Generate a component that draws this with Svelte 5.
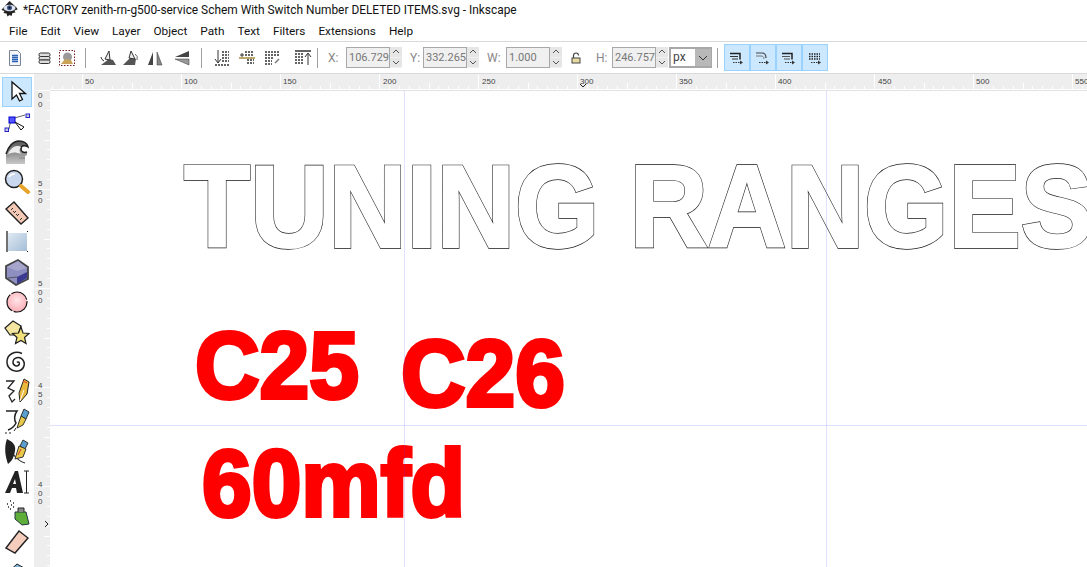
<script>
  const menu = ['File','Edit','View','Layer','Object','Path','Text','Filters','Extensions','Help'];
  const hLabels = [[83,'50'],[182,'100'],[281,'150'],[381,'200'],[480,'250'],[578,'300'],[677,'350'],[776,'400'],[876,'450'],[974,'500'],[1073,'550']];
  const hTicks = [];
  for (let i = -8; i < 110; i++) {
    const x = 83 + i * 9.9 - 51;
    hTicks.push({ x: Math.round(x), h: i % 10 === 0 ? 15 : i % 5 === 0 ? 6 : 3 });
  }
  const vLabels = [[90,['0','0']],[178,['5','5','0']],[278,['5','0','0']],[380,['4','5','0']],[479,['4','0','0']]];
  const vTicks = [];
  for (let i = 0; i < 50; i++) {
    const y = 89 + i * 9.9 - 73;
    vTicks.push({ y: Math.round(y), w: i % 10 === 0 ? 15 : i % 5 === 0 ? 6 : 3 });
  }
  const fields = [
    { lab: 'X:', cls: 'lx', val: '106.729' },
    { lab: 'Y:', cls: 'ly', val: '332.265' },
    { lab: 'W:', cls: 'lw', val: '1.000' }
  ];
</script>

{#snippet spin()}
  <span class="spin">
    <b><svg width="8" height="5" viewBox="0 0 8 5"><path d="M1 4l3-3 3 3" fill="none" stroke="#555"/></svg></b>
    <b><svg width="8" height="5" viewBox="0 0 8 5"><path d="M1 1l3 3 3-3" fill="none" stroke="#555"/></svg></b>
  </span>
{/snippet}

<div class="window">
  <header class="title">
    <svg class="logo" width="20" height="20" viewBox="0 0 20 20">
      <path d="M9.500 1 3 8 1.500 10l3 1-1 2 3 .5 1 3 2-1.500 2 1 1-3 3-.5-1-2 3-1L17 8z" fill="#222"/>
      <ellipse cx="9.500" cy="8" rx="6" ry="3.300" fill="#dfe6f2"/>
      <circle cx="9.500" cy="7.800" r="2.500" fill="#3a4f86"/>
      <circle cx="9.500" cy="7.800" r="1" fill="#111"/>
    </svg>
    <span>*FACTORY zenith-rn-g500-service Schem With Switch Number DELETED ITEMS.svg - Inkscape</span>
  </header>

  <nav class="menu">
    {#each menu as m}<span>{m}</span>{/each}
  </nav>

  <div class="controls">
    <svg class="i i1" width="18" height="18" viewBox="0 0 18 18"><path d="M3.500 1.500h8l3 3v12h-11z" fill="#f4f6fa" stroke="#7a8496"/><path d="M6 6.500h6M6 8.500h6M6 10.500h6M6 12.500h6" stroke="#2a62b8" stroke-width="1.300"/></svg>
    <svg class="i i2" width="16" height="16" viewBox="0 0 16 16"><g fill="#ddd" stroke="#333"><rect x="2" y="3" width="11" height="3.500" rx="1.500"/><rect x="2" y="6.500" width="11" height="3.500" rx="1.500"/><rect x="2" y="10" width="11" height="3.500" rx="1.500"/></g></svg>
    <svg class="i i3" width="18" height="18" viewBox="0 0 18 18"><rect x="1.500" y="1.500" width="15" height="15" fill="none" stroke="#7a1a1a" stroke-dasharray="1.500 1.500"/><circle cx="9.500" cy="8" r="4.500" fill="#999"/><path d="M3 15l4-5 6 1 2 4z" fill="#c9a35a"/></svg>
    <i class="sep s1"></i>
    <svg class="i i4" width="18" height="18" viewBox="0 0 18 18"><path d="M2 16h15l-3-5-4-1z" fill="#555"/><path d="M10 2 6 10l5 1z" fill="#eee" stroke="#333"/><path d="M2 8a5 5 0 0 0 3 4" fill="none" stroke="#333"/></svg>
    <svg class="i i5" width="18" height="18" viewBox="0 0 18 18"><path d="M1 16h12l1-6-6-1z" fill="#555"/><path d="M9 2l-2 7 6 1z" fill="#eee" stroke="#333"/><path d="M13 5a5 5 0 0 1 2 6" fill="none" stroke="#666"/></svg>
    <svg class="i i6" width="16" height="18" viewBox="0 0 16 18"><path d="M6 3 1 16h5z" fill="#444"/><path d="M10 3l5 13h-5z" fill="#888" stroke="#333" stroke-width=".5"/></svg>
    <svg class="i i7" width="18" height="16" viewBox="0 0 18 16"><path d="M15 1 1 7h14z" fill="#444"/><path d="M15 9 1 9l14 6z" fill="#999" stroke="#333" stroke-width=".5"/></svg>
    <i class="sep s2"></i>
    <svg class="i i8" width="18" height="18" viewBox="0 0 18 18"><path d="M5 1v12M2 10l3 4 3-4" fill="none" stroke="#333"/><path d="M2 16h15M9 3h7M9 6h7M9 9h7M9 12h7" stroke="#333" stroke-width="1.500" stroke-dasharray="2 1"/></svg>
    <svg class="i i9" width="18" height="18" viewBox="0 0 18 18"><path d="M7 3h9M7 6h9M9 11h7M9 14h7" stroke="#333" stroke-width="1.500" stroke-dasharray="2 1"/><path d="M1 9h16" stroke="#a58a3a" stroke-width="1.500"/><path d="M4 4v4M2 6h4" stroke="#333"/></svg>
    <svg class="i i10" width="18" height="18" viewBox="0 0 18 18"><path d="M1 3h14M1 6h14M1 9h9M1 12h7M1 15h7" stroke="#333" stroke-width="1.500" stroke-dasharray="2 1"/><path d="M11 14l4-4" stroke="#777" stroke-width="1.500"/></svg>
    <svg class="i i11" width="18" height="18" viewBox="0 0 18 18"><path d="M1 2h16" stroke="#333" stroke-width="1.500"/><path d="M1 5h8M1 8h8M1 11h8M1 14h8" stroke="#333" stroke-width="1.500" stroke-dasharray="2 1"/><path d="M14 16V5M11 8l3-4 3 4" fill="none" stroke="#333"/></svg>
    <i class="sep s3"></i>

    {#each fields as f}
      <span class="lab {f.cls}">{f.lab}</span>
      <span class="num">{f.val}</span>
      {@render spin()}
    {/each}
    <svg class="lock" width="10" height="12" viewBox="0 0 10 12"><path d="M2.500 6V3.500a2.500 2.500 0 0 1 5 0" fill="none" stroke="#444" stroke-width="1.200"/><rect x="1" y="6" width="8" height="5" fill="#e8dca0" stroke="#444"/></svg>
    <span class="lab lh">H:</span>
    <span class="num">246.757</span>
    {@render spin()}
    <span class="unit"><span>px</span><span class="arrow"><svg width="10" height="6" viewBox="0 0 10 6"><path d="M1 1l4 4 4-4" fill="none" stroke="#333"/></svg></span></span>
    <i class="sep s4"></i>
    <div class="toggles">
      {#each [0,1,2,3] as k}
        <span class="toggle">
          <svg width="16" height="14" viewBox="0 0 16 14">
            {#if k === 1}
              <path d="M1 2h6c3 0 4 2 4 5" fill="none" stroke="#444" stroke-width="1.200"/>
              <path d="M1 5h5c2 0 3 1 3 3" fill="none" stroke="#777"/>
            {:else if k === 3}
              <path d="M2 3h11M2 5.500h11M2 8h11" stroke="#222" stroke-width="1.500" stroke-dasharray="1.500 1"/>
            {:else}
              <path d="M1 2.500h10v6" fill="none" stroke="#222" stroke-width="1.500"/>
              <path d="M1 5.500h8M3 8h6" stroke={k === 2 ? '#555' : '#333'} stroke-width="1.200"/>
            {/if}
            <path d="M4 11.500h8" stroke="#333" stroke-dasharray="1.500 1"/>
            <path d="M11 9.500l3 2-3 2z" fill="#333"/>
          </svg>
        </span>
      {/each}
    </div>
  </div>

  <div class="workspace">
    <aside class="tools">
      <span class="tool active"><svg width="24" height="24" viewBox="0 0 24 24"><path d="M7 2v17l4.500-4 3 6 3-1.500-3-6h6z" fill="#fff" stroke="#111" stroke-width="1.300"/></svg></span>
      <span class="tool"><svg width="26" height="26" viewBox="0 0 26 26"><path d="M5 20 7 10l14-4" fill="none" stroke="#666"/><rect x="5" y="8" width="6" height="6" fill="#55f" stroke="#00c"/><rect x="22" y="5" width="3.500" height="3.500" fill="#ccd" stroke="#22c"/><rect x="1" y="19" width="3.500" height="3.500" fill="#ccd" stroke="#22c"/><path d="M11 13l6 8 3-3z" fill="#fff" stroke="#111"/></svg></span>
      <span class="tool"><svg width="24" height="26" viewBox="0 0 24 26"><defs><linearGradient id="w" x1="0" y1="0" x2="0" y2="1"><stop offset="0" stop-color="#555"/><stop offset="1" stop-color="#c8c8c8"/></linearGradient></defs><path d="M1 25v-9C3 8 8 2 14 2c4 0 8 2 9 6-3-2-7-2-7 2 0 3 3 4 6 3v3l-2 1v8z" fill="url(#w)"/><path d="M1 15C3 8 8 2 14 2c4 0 8 2 9 6-3-2-7-2-7 2 0 3 3 4 6 3" fill="none" stroke="#222" stroke-width="1.500"/><path d="M3 15c2-4 5-8 9-8 2 0 3 0 4 1-2 2-2 5 0 7-5-2-9-2-13 0z" fill="#fff" opacity=".85"/><path d="M14 19h6M1 17h3" stroke="#888"/></svg></span>
      <span class="tool"><svg width="26" height="26" viewBox="0 0 26 26"><circle cx="10" cy="10" r="8.500" fill="#c9d8ee" stroke="#222" stroke-width="1.500"/><path d="M5 8a6 6 0 0 1 6-3" fill="none" stroke="#fff" stroke-width="1.500"/><path d="M17 17l7 6" stroke="#e8a32a" stroke-width="4" stroke-linecap="round"/></svg></span>
      <span class="tool"><svg width="24" height="26" viewBox="0 0 24 26"><path d="M1 10 9 3l14 16-7 6z" fill="#f3c9b5" stroke="#222" stroke-width="1.400"/><path d="M6 11l2-2M9 14l2-2M12 17l2-2M15 21l2-2M8 13l1-1M11 16l1-1" stroke="#333"/></svg></span>
      <span class="tool"><svg width="24" height="24" viewBox="0 0 24 24"><defs><linearGradient id="r" x1="0" y1="0" x2="1" y2="1"><stop offset="0" stop-color="#dfe9f3"/><stop offset="1" stop-color="#a5bdd6"/></linearGradient></defs><rect x="3" y="3" width="19" height="18" fill="url(#r)"/><path d="M2 1v21" stroke="#111" stroke-width="1.200"/><path d="M22 1.500h1M22 21.500h1" stroke="#111"/></svg></span>
      <span class="tool"><svg width="26" height="28" viewBox="0 0 26 28"><path d="M2 8 14 2l10 7v12L12 27 2 20z" fill="#8e8ec0" stroke="#444" stroke-width="1.800"/><path d="M3 9l11-6 9 7-10 3z" fill="#a6a6cc"/><path d="M13 19l10-5v6l-10 6z" fill="#3a3a90"/><path d="M4 20l9-1" stroke="#556" fill="none"/></svg></span>
      <span class="tool"><svg width="24" height="24" viewBox="0 0 24 24"><defs><radialGradient id="c" cx=".5" cy=".4"><stop offset="0" stop-color="#fde6e8"/><stop offset="1" stop-color="#fbb5bd"/></radialGradient></defs><circle cx="12" cy="12" r="10" fill="url(#c)" stroke="#111" stroke-width="1.200" stroke-dasharray="19 1.500"/></svg></span>
      <span class="tool"><svg width="26" height="26" viewBox="0 0 26 26"><path d="M1 9l8-7 8 5-3 9-8 0z" fill="#f4e6a0" stroke="#222" stroke-width="1.200"/><path d="M17 8l2 6 6 .5-4.500 4 1.500 6-5-3-5.500 3 1.500-6-4.500-4 6-.5z" fill="#f2e17a" stroke="#222" stroke-width="1.200"/></svg></span>
      <span class="tool"><svg width="26" height="26" viewBox="0 0 26 26"><path d="M13 13.500c1-1.500 3 0 2.200 2-1.500 2.500-6.500 1.500-6.200-2.500.3-4.500 6.500-6 9.500-2.500 3.500 4 1.500 10.500-4.500 11.500-6.500 1-11.500-4-11-10C3.500 5 11 1.500 18 4.500" fill="none" stroke="#222" stroke-width="1.500"/></svg></span>
      <span class="tool"><svg width="26" height="28" viewBox="0 0 26 28"><path d="M2 3h8L4 10l6 3-5 5 3 6 3-3" fill="none" stroke="#222" stroke-width="1.300"/><path d="M20 1l5 3-2 12-7 8-1-9z" fill="#e8b93a" stroke="#222"/><path d="M16 23l4-11" stroke="#fff"/><path d="M19 3l4 2" stroke="#e33"/></svg></span>
      <span class="tool"><svg width="26" height="28" viewBox="0 0 26 28"><path d="M2 3h11c-3 4-3 9-1 12-2 4-5 6-8 7" fill="none" stroke="#222" stroke-width="1.500"/><path d="M20 1l5 3-3 7-5-3z" fill="#5a9fd0" stroke="#333"/><path d="M17 8l5 3-3 6-6 3z" fill="#e8c84a" stroke="#333"/><path d="M1 25h2M5 25h2M10 23l2-3" stroke="#222"/></svg></span>
      <span class="tool"><svg width="26" height="30" viewBox="0 0 26 30"><path d="M3 2c6 3 9 6 8 12s-3 10-7 13c-3-8-4-17-1-25z" fill="#222"/><path d="M8 16c4 5 8 9 13 10" fill="none" stroke="#222" stroke-width="1.200"/><path d="M19 3l5 3-3 6-5-3z" fill="#5a9fd0" stroke="#333"/><path d="M15 9l7 3-3 8-8 2z" fill="#e8c84a" stroke="#333"/><path d="M17 12l-3 6" stroke="#c33"/></svg></span>
      <span class="tool"><svg width="26" height="26" viewBox="0 0 26 26"><path d="M1 24 11 2h3l5 22h-6l-1-5H8l-2 5zM9 15h3l-1-5z" fill="#222" fill-rule="evenodd"/><path d="M20 2h5M22.500 2v22M20 24h5" fill="none" stroke="#222"/></svg></span>
      <span class="tool"><svg width="26" height="28" viewBox="0 0 26 28"><path d="M11 14h11l3 12-7 1-7-6z" fill="#5fae3a" stroke="#234"/><path d="M14 14v-4h6v4" fill="#888" stroke="#222"/><path d="M6 3h1M9 5h1M3 6h1M7 7h1M4 9h1M9 9h1M6 11h1" stroke="#222" stroke-width="1.400"/></svg></span>
      <span class="tool"><svg width="26" height="26" viewBox="0 0 26 26"><path d="M2 19 15 2l9 7-13 15z" fill="#f5cdbc" stroke="#222" stroke-width="1.400"/></svg></span>
      <span class="tool"><svg width="26" height="26" viewBox="0 0 26 26"><path d="M3 14 13 5l9 5-2 12-14 1z" fill="#7bb3d6" stroke="#222"/></svg></span>
    </aside>

    <div class="vruler">
      <svg width="16" height="494" viewBox="0 0 16 494">
        {#each vTicks as t}<rect x={16 - t.w} y={t.y} width={t.w} height="1" fill="#fff"/>{/each}
        {#each vLabels as [y, ds]}
          {#each ds as d, i}<text x="4" y={y - 73 + 7 + i * 8.500} class="rt">{d}</text>{/each}
        {/each}
        <path d="M11 447l3 3-3 3" fill="none" stroke="#222"/>
      </svg>
    </div>

    <div class="main">
      <div class="hruler">
        <svg width="1037" height="15" viewBox="0 0 1037 15">
          {#each hTicks as t}<rect x={t.x} y={15 - t.h} width="1" height={t.h} fill="#fff"/>{/each}
          {#each hLabels as [x, l]}<text x={x - 50 + 2} y="10" class="rt">{l}</text>{/each}
          <path d="M530 10l3 3 3-3" fill="none" stroke="#222"/>
        </svg>
      </div>
      <div class="canvas">
        <div class="outline">TUNING RANGES</div>
        <div class="red c25">C25</div>
        <div class="red c26">C26</div>
        <div class="red mfd">60mfd</div>
        <i class="guide v g1"></i>
        <i class="guide v g2"></i>
        <i class="guide h"></i>
      </div>
    </div>
  </div>
</div>

<style>
  :global(body) { margin: 0; background: #fff; overflow: hidden; }
  .window { width: 1087px; height: 567px; display: flex; flex-direction: column; overflow: hidden; font-family: Roboto, "Open Sans", sans-serif; color: #111; }
  .title { height: 20px; display: flex; align-items: center; font-size: 11.900px; white-space: nowrap; flex: none; }
  .logo { margin: 0 3px 0 0; flex: none; }
  .menu { height: 21px; display: flex; align-items: center; gap: 13px; padding-left: 9px; font-size: 11.800px; border-bottom: 1px solid #d9d9d9; flex: none; }
  .controls { height: 31px; display: flex; align-items: center; border-bottom: 1px solid #d9d9d9; flex: none; }
  .i { flex: none; }
  .i1 { margin-left: 6px; }
  .i2 { margin-left: 13px; }
  .i3 { margin-left: 5px; }
  .sep { flex: none; width: 1px; height: 20px; background: #a0a0a0; display: block; }
  .s1 { margin-left: 9px; }
  .i4 { margin-left: 13px; }
  .i5 { margin-left: 5px; }
  .i6 { margin-left: 7px; }
  .i7 { margin-left: 11px; }
  .s2 { margin-left: 9px; }
  .i8 { margin-left: 11px; }
  .i9 { margin-left: 7px; }
  .i10 { margin-left: 8px; }
  .i11 { margin-left: 12px; }
  .s3 { margin-left: 5px; }
  .lab { color: #888; font-size: 12px; flex: none; }
  .lx { margin-left: 10px; margin-right: 4px; width: 14px; }
  .ly { margin-left: 8px; width: 13px; }
  .lw { margin-left: 8px; margin-right: 6px; width: 13px; }
  .lh { margin-left: 15px; margin-right: 2px; width: 14px; }
  .lock { margin-left: 9px; flex: none; }
  .num { box-sizing: border-box; width: 44px; height: 21px; border: 1px solid #a8a8a8; background: #f0f0f0; color: #777; font-size: 11px; line-height: 19px; padding-left: 2px; flex: none; white-space: nowrap; }
  .spin { width: 12px; height: 21px; flex: none; background: #f0f0f0; display: flex; flex-direction: column; }
  .spin b { height: 10px; margin-bottom: 1px; background: #e6e6e6; display: flex; align-items: center; justify-content: center; }
  .unit { margin-left: 1px; box-sizing: border-box; width: 43px; height: 21px; border: 2px solid #a8a8a8; display: flex; align-items: stretch; font-size: 12px; line-height: 17px; padding-left: 2px; flex: none; justify-content: space-between; color: #444; }
  .arrow { background: #b8b8b8; width: 16px; display: flex; align-items: center; justify-content: center; margin-right: -1px; }
  .s4 { margin-left: 5px; }
  .toggles { display: flex; margin-left: 6px; }
  .toggle { box-sizing: border-box; width: 26px; height: 27px; background: #cce8ff; border: 1px solid #99d1ff; display: flex; align-items: center; justify-content: center; }
  .workspace { flex: 1; display: flex; min-height: 0; }
  .tools { width: 34px; flex: none; display: flex; flex-direction: column; align-items: center; padding-top: 3px; overflow: hidden; }
  .tool { width: 30px; height: 30px; flex: none; display: flex; align-items: center; justify-content: center; box-sizing: border-box; }
  .tool svg { flex: none; }
  .tool.active { background: #cce8ff; border: 1px solid #99d1ff; }
  .vruler { width: 16px; flex: none; background: #eee; overflow: hidden; }
  .vruler svg { display: block; }
  .rt { font: 8px "Liberation Sans", sans-serif; fill: #444; }
  .main { flex: 1; min-width: 0; display: flex; flex-direction: column; }
  .hruler { height: 15px; background: #eee; border-bottom: 1px solid #fff; box-shadow: 0 1px 0 #e2e2e2; flex: none; overflow: hidden; z-index: 1; }
  .hruler svg { display: block; }
  .canvas { flex: 1; position: relative; overflow: hidden; background: #fff; isolation: isolate; }
  .guide { position: absolute; background: rgba(60, 60, 255, .16); display: block; }
  .guide.v { top: 0; bottom: 0; width: 1px; }
  .g1 { left: 354px; }
  .g2 { left: 776px; }
  .guide.h { left: 0; right: 0; top: 335px; height: 1px; }
  .outline, .red { position: absolute; font-family: "Liberation Sans", Arial, sans-serif; font-weight: 700; white-space: pre; line-height: 1; transform-origin: 0 0; }
  .outline { left: 134px; top: 59px; font-size: 116.500px; transform: scaleX(.93); color: #fff; -webkit-text-stroke: 2.200px #fff; }
  .outline::before { content: "TUNING RANGES"; position: absolute; left: 0; top: 0; z-index: -1; color: #111; -webkit-text-stroke: 3.400px #111; }
  .red { color: #f00; font-size: 94px; -webkit-text-stroke: 4px #f00; transform: scaleX(.95); }
  .c25 { left: 145px; top: 229px; }
  .c26 { left: 351px; top: 237px; }
  .mfd { left: 152px; top: 347px; }
</style>
